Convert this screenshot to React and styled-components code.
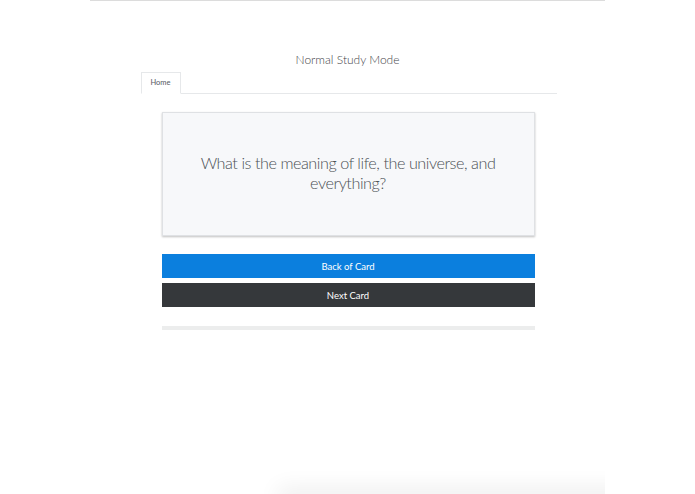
import React from 'react';
import styled, { createGlobalStyle } from 'styled-components';

const GlobalStyle = createGlobalStyle`
  html, body {
    margin: 0;
    padding: 0;
    background: #ffffff;
  }
  body {
    font-family: Lato, "Noto Sans", sans-serif;
    color: #495057;
  }
`;

const Page = styled.div`
  width: 695px;
  height: 494px;
  overflow: hidden;
  display: flex;
  padding-left: 90px;
  box-sizing: border-box;
`;

const Frame = styled.div`
  position: relative;
  overflow: hidden;
  width: 515px;
  height: 494px;
  background: #ffffff;
  border-top: 1px solid #dcdcdc;
  box-sizing: border-box;
  display: flex;
  flex-direction: column;
  align-items: center;
`;

const Title = styled.h1`
  margin: 51px 0 4px;
  font-size: 12px;
  font-weight: 300;
  color: #3f4449;
  line-height: 16px;
`;

const TabBar = styled.div`
  width: 416px;
  margin-left: 2px;
  display: flex;
  border-bottom: 1px solid #e6e8ea;
`;

const Tab = styled.div`
  padding: 0 9px;
  height: 20px;
  line-height: 20px;
  font-size: 7.5px;
  color: #555a5f;
  background: #fff;
  border: 1px solid #e6e8ea;
  border-bottom-color: #fff;
  margin-bottom: -1px;
`;

const Content = styled.div`
  width: 373px;
  margin: 18px 0 0 1px;
  display: flex;
  flex-direction: column;
`;

const Card = styled.div`
  height: 124px;
  background: #f7f8fa;
  border: 1px solid #dfe1e4;
  box-shadow: 0 1px 2px rgba(0, 0, 0, 0.25);
  box-sizing: border-box;
  display: flex;
  align-items: center;
  justify-content: center;
  padding: 0 28px 2px;
  text-align: center;
  font-size: 16.2px;
  letter-spacing: -0.45px;
  font-weight: 300;
  line-height: 20px;
  color: #4b5055;
`;

const Button = styled.button`
  height: 24px;
  width: 100%;
  border: none;
  margin-top: ${p => p.gap}px;
  background: ${p => p.bg};
  color: #ffffff;
  font-family: Lato, "Noto Sans", sans-serif;
  font-size: 9.5px;
  padding: 0;
  cursor: pointer;
`;

const Track = styled.div`
  margin-top: 19px;
  height: 4px;
  background: #eceded;
`;

/* shadow of a panel sitting just below the visible area */
const BottomShade = styled.div`
  position: absolute;
  left: 188px;
  right: -30px;
  bottom: -20px;
  height: 20px;
  box-shadow: 0 -6px 22px rgba(0, 0, 0, 0.07);
  background: #ececec;
`;

export default function App() {
  return (
    <>
      <GlobalStyle />
      <Page>
        <Frame>
          <Title>Normal Study Mode</Title>
          <TabBar>
            <Tab>Home</Tab>
          </TabBar>
          <Content>
            <Card>What is the meaning of life, the universe, and everything?</Card>
            <Button gap={18} bg="#0b7fde">Back of Card</Button>
            <Button gap={5} bg="#35383b">Next Card</Button>
            <Track />
          </Content>
          <BottomShade />
        </Frame>
      </Page>
    </>
  );
}
